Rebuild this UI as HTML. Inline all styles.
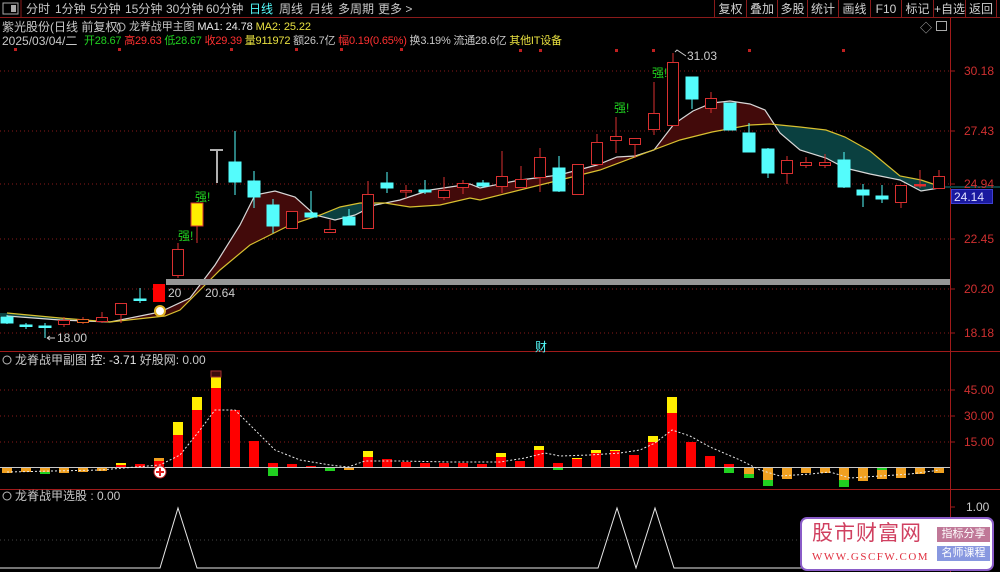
<!DOCTYPE html>
<html><head><meta charset="utf-8"><style>
*{margin:0;padding:0;box-sizing:border-box}
body{width:1000px;height:572px;background:#000;overflow:hidden;position:relative;font-family:"Liberation Sans","Noto Sans CJK SC",sans-serif;font-size:12px;color:#c8c8c8}
.a{position:absolute;white-space:nowrap;line-height:14px}
.btn{position:absolute;top:0;height:18px;border-left:1px solid #8a1a1a;color:#d0d0d0;text-align:center;line-height:18px;font-size:12px}
</style></head><body>
<svg width="1000" height="572" style="position:absolute;left:0;top:0">
<defs>
<clipPath id="aboveY"><polygon points="0,0 1000,0 1000,186 939,186 921,180 900,176 870,151 845,137 826,130 800,127 770,124 750,125 712,132 680,140 640,155 600,170 560,180 520,190 480,200 470,198 440,205 410,207 385,203 360,203 340,207 320,215 290,225 250,245 220,270 200,290 180,310 165,316 110,322 60,318 7,313 0,313"/></clipPath>
<clipPath id="belowY"><polygon points="0,572 1000,572 1000,186 939,186 921,180 900,176 870,151 845,137 826,130 800,127 770,124 750,125 712,132 680,140 640,155 600,170 560,180 520,190 480,200 470,198 440,205 410,207 385,203 360,203 340,207 320,215 290,225 250,245 220,270 200,290 180,310 165,316 110,322 60,318 7,313 0,313"/></clipPath>
</defs>
<line x1="0" y1="17.5" x2="1000" y2="17.5" stroke="#8a1a1a"/>
<rect x="3" y="3" width="15" height="11" fill="none" stroke="#aaa"/><rect x="11" y="5" width="5" height="7" fill="#aaa"/>
<line x1="21" y1="0" x2="21" y2="17" stroke="#8a1a1a"/>
<g stroke="#8a1a1a" stroke-dasharray="1,3">
<line x1="0" y1="71" x2="950" y2="71"/><line x1="0" y1="131" x2="950" y2="131"/><line x1="0" y1="184" x2="950" y2="184"/><line x1="0" y1="239" x2="950" y2="239"/><line x1="0" y1="289" x2="950" y2="289"/><line x1="0" y1="333" x2="950" y2="333"/>
<line x1="0" y1="390" x2="950" y2="390"/><line x1="0" y1="416" x2="950" y2="416"/><line x1="0" y1="442" x2="950" y2="442"/>
</g>
<g fill="#c02020"><rect x="519" y="49" width="3" height="3"/><rect x="539" y="49" width="3" height="3"/><rect x="615" y="49" width="3" height="3"/><rect x="652" y="49" width="3" height="3"/><rect x="748" y="49" width="3" height="3"/><rect x="842" y="49" width="3" height="3"/><rect x="14" y="48" width="3" height="3"/><rect x="118" y="48" width="3" height="3"/><rect x="230" y="48" width="3" height="3"/><rect x="295" y="48" width="3" height="3"/><rect x="340" y="48" width="3" height="3"/><rect x="400" y="48" width="3" height="3"/></g>
<line x1="950.5" y1="18" x2="950.5" y2="572" stroke="#a01a1a"/>
<line x1="0" y1="351.5" x2="1000" y2="351.5" stroke="#a01a1a"/>
<line x1="0" y1="489.5" x2="1000" y2="489.5" stroke="#a01a1a"/>
<g stroke="#a01a1a"><line x1="950" y1="71" x2="955" y2="71"/><line x1="950" y1="131" x2="955" y2="131"/><line x1="950" y1="184" x2="955" y2="184"/><line x1="950" y1="239" x2="955" y2="239"/><line x1="950" y1="289" x2="955" y2="289"/><line x1="950" y1="333" x2="955" y2="333"/><line x1="950" y1="390" x2="955" y2="390"/><line x1="950" y1="416" x2="955" y2="416"/><line x1="950" y1="442" x2="955" y2="442"/><line x1="950" y1="507" x2="955" y2="507"/></g>
<polygon clip-path="url(#aboveY)" fill="#420a0a" points="0,316 7,316 60,320 110,322 160,312 190,298 215,265 240,225 255,195 275,191 295,197 315,215 335,220 355,215 375,205 400,200 430,190 470,184 480,188 520,180 559,175 597,165 617,157 635,156 654,150 674,124 693,111 712,103 730,101 750,104 765,110 780,133 800,150 826,158 845,168 870,174 900,180 921,191 939,188 1000,188 1000,572 0,572"/>
<polygon clip-path="url(#belowY)" fill="#0a4040" points="0,316 7,316 60,320 110,322 160,312 190,298 215,265 240,225 255,195 275,191 295,197 315,215 335,220 355,215 375,205 400,200 430,190 470,184 480,188 520,180 559,175 597,165 617,157 635,156 654,150 674,124 693,111 712,103 730,101 750,104 765,110 780,133 800,150 826,158 845,168 870,174 900,180 921,191 939,188 1000,188 1000,0 0,0"/>
<polyline fill="none" stroke="#d8d8d8" stroke-width="1.2" points="7,316 60,320 110,322 160,312 190,298 215,265 240,225 255,195 275,191 295,197 315,215 335,220 355,215 375,205 400,200 430,190 470,184 480,188 520,180 559,175 597,165 617,157 635,156 654,150 674,124 693,111 712,103 730,101 750,104 765,110 780,133 800,150 826,158 845,168 870,174 900,180 921,191 939,188"/>
<polyline fill="none" stroke="#d8c030" stroke-width="1.2" points="7,313 60,318 110,322 165,316 180,310 200,290 220,270 250,245 290,225 320,215 340,207 360,203 385,203 410,207 440,205 470,198 480,200 520,190 560,180 600,170 640,155 680,140 712,132 750,125 770,124 800,127 826,130 845,137 870,151 900,176 921,180 939,186"/>
<rect x="166" y="279" width="784" height="6" fill="#969696"/>
<g stroke-width="1">
<g stroke="#54fcfc" fill="#54fcfc">
<line x1="7" y1="315" x2="7" y2="324"/><rect x="1" y="317" width="12" height="6"/>
<line x1="26" y1="323" x2="26" y2="329"/><rect x="20" y="325" width="12" height="1.5"/>
<line x1="45" y1="323" x2="45" y2="338"/><rect x="39" y="326" width="12" height="1.5"/>
<line x1="140" y1="288" x2="140" y2="303"/><rect x="134" y="299" width="12" height="1.5"/>
<line x1="235" y1="131" x2="235" y2="195"/><rect x="229" y="162" width="12" height="20"/>
<line x1="254" y1="171" x2="254" y2="208"/><rect x="248" y="181" width="12" height="16"/>
<line x1="273" y1="199" x2="273" y2="233"/><rect x="267" y="205" width="12" height="21"/>
<line x1="311" y1="191" x2="311" y2="218"/><rect x="305" y="213" width="12" height="4"/>
<line x1="349" y1="209" x2="349" y2="225"/><rect x="343" y="217" width="12" height="8"/>
<line x1="387" y1="172" x2="387" y2="193"/><rect x="381" y="183" width="12" height="5"/>
<line x1="425" y1="180" x2="425" y2="194"/><rect x="419" y="190" width="12" height="2"/>
<line x1="483" y1="180" x2="483" y2="188"/><rect x="477" y="183" width="12" height="3"/>
<line x1="559" y1="156" x2="559" y2="192"/><rect x="553" y="168" width="12" height="23"/>
<line x1="692" y1="77" x2="692" y2="109"/><rect x="686" y="77" width="12" height="22"/>
<rect x="724" y="103" width="12" height="27"/>
<line x1="749" y1="123" x2="749" y2="152"/><rect x="743" y="133" width="12" height="19"/>
<line x1="768" y1="148" x2="768" y2="178"/><rect x="762" y="149" width="12" height="24"/>
<line x1="844" y1="152" x2="844" y2="188"/><rect x="838" y="160" width="12" height="27"/>
<line x1="863" y1="184" x2="863" y2="207"/><rect x="857" y="190" width="12" height="5"/>
<line x1="882" y1="185" x2="882" y2="203"/><rect x="876" y="196" width="12" height="3"/>
</g>
<g stroke="#d83030" fill="#000">
<line x1="64" y1="317" x2="64" y2="327"/><rect x="58.5" y="320.5" width="11" height="4"/>
<line x1="83" y1="317" x2="83" y2="324"/><rect x="77.5" y="319.5" width="11" height="3" stroke="#e06020"/>
<line x1="102" y1="312" x2="102" y2="323"/><rect x="96.5" y="317.5" width="11" height="4"/>
<line x1="121" y1="303" x2="121" y2="323"/><rect x="115.5" y="303.5" width="11" height="11"/>
<line x1="178" y1="243" x2="178" y2="278"/><rect x="172.5" y="249.5" width="11" height="26"/>
<rect x="286.5" y="211.5" width="11" height="17"/>
<line x1="330" y1="220" x2="330" y2="232"/><rect x="324.5" y="229.5" width="11" height="3"/>
<line x1="368" y1="181" x2="368" y2="228"/><rect x="362.5" y="194.5" width="11" height="34"/>
<line x1="406" y1="185" x2="406" y2="198"/><rect x="400.5" y="190.5" width="11" height="1.5"/>
<line x1="444" y1="177" x2="444" y2="200"/><rect x="438.5" y="190.5" width="11" height="7"/>
<line x1="463" y1="180" x2="463" y2="194"/><rect x="457.5" y="183.5" width="11" height="4"/>
<line x1="502" y1="151" x2="502" y2="193"/><rect x="496.5" y="176.5" width="11" height="10"/>
<line x1="521" y1="166" x2="521" y2="188"/><rect x="515.5" y="179.5" width="11" height="8"/>
<line x1="540" y1="148" x2="540" y2="192"/><rect x="534.5" y="157.5" width="11" height="20"/>
<rect x="572.5" y="164.5" width="11" height="30"/>
<line x1="597" y1="134" x2="597" y2="164"/><rect x="591.5" y="142.5" width="11" height="22"/>
<line x1="616" y1="117" x2="616" y2="153"/><rect x="610.5" y="136.5" width="11" height="4"/>
<line x1="635" y1="138" x2="635" y2="158"/><rect x="629.5" y="138.5" width="11" height="6"/>
<line x1="654" y1="82" x2="654" y2="135"/><rect x="648.5" y="113.5" width="11" height="16"/>
<line x1="673" y1="53" x2="673" y2="125"/><rect x="667.5" y="62.5" width="11" height="63"/>
<line x1="711" y1="92" x2="711" y2="113"/><rect x="705.5" y="98.5" width="11" height="10"/>
<line x1="787" y1="156" x2="787" y2="184"/><rect x="781.5" y="160.5" width="11" height="13"/>
<line x1="806" y1="157" x2="806" y2="168"/><rect x="800.5" y="162.5" width="11" height="3"/>
<line x1="825" y1="154" x2="825" y2="168"/><rect x="819.5" y="162.5" width="11" height="3"/>
<line x1="901" y1="185" x2="901" y2="208"/><rect x="895.5" y="185.5" width="11" height="17"/>
<line x1="920" y1="170" x2="920" y2="188"/><rect x="914.5" y="184.5" width="11" height="1.5" fill="#ff2020"/>
<line x1="939" y1="170" x2="939" y2="188"/><rect x="933.5" y="176.5" width="11" height="12"/>
</g>
<rect x="153" y="284" width="12" height="18" fill="#ff0000"/>
<line x1="197" y1="226" x2="197" y2="243" stroke="#d83030"/>
<rect x="191" y="203" width="12" height="23" fill="#ffee00" stroke="#d83030"/>
<g stroke="#b0b0b0" stroke-width="2"><line x1="210" y1="150" x2="223" y2="150"/><line x1="217" y1="150" x2="217" y2="183"/></g>
</g>
<circle cx="160" cy="311" r="5" fill="#fff" stroke="#e0b020" stroke-width="2"/>
<line x1="0" y1="467.5" x2="950" y2="467.5" stroke="#c8c8c8"/>
<g>
<g fill="#f0a020">
<rect x="2" y="468" width="10" height="5"/><rect x="21" y="468" width="10" height="4"/><rect x="40" y="468" width="10" height="6"/><rect x="59" y="468" width="10" height="5"/><rect x="78" y="468" width="10" height="4"/><rect x="97" y="468" width="10" height="3"/><rect x="344" y="468" width="10" height="2"/>
<rect x="744" y="468" width="10" height="7"/><rect x="763" y="468" width="10" height="12"/><rect x="782" y="468" width="10" height="11"/><rect x="801" y="468" width="10" height="5"/><rect x="820" y="468" width="10" height="5"/><rect x="839" y="468" width="10" height="12"/><rect x="858" y="468" width="10" height="13"/><rect x="877" y="468" width="10" height="11"/><rect x="896" y="468" width="10" height="10"/><rect x="915" y="468" width="10" height="6"/><rect x="934" y="468" width="10" height="5"/>
</g>
<g fill="#20d020"><rect x="40" y="472" width="10" height="2"/><rect x="268" y="468" width="10" height="8"/><rect x="325" y="468" width="10" height="3"/><rect x="553" y="468" width="10" height="2"/><rect x="724" y="468" width="10" height="5"/><rect x="744" y="474" width="10" height="4"/><rect x="763" y="480" width="10" height="6"/><rect x="839" y="480" width="10" height="7"/><rect x="877" y="468" width="10" height="2"/></g>
<g fill="#ff0000">
<rect x="116" y="464" width="10" height="3"/><rect x="135" y="464" width="10" height="3"/><rect x="154" y="458" width="10" height="9"/>
<rect x="173" y="422" width="10" height="45"/><rect x="192" y="397" width="10" height="70"/><rect x="211" y="371" width="10" height="96"/><rect x="230" y="410" width="10" height="57"/><rect x="249" y="441" width="10" height="26"/><rect x="268" y="463" width="10" height="4"/><rect x="287" y="464" width="10" height="3"/><rect x="306" y="466" width="10" height="1"/>
<rect x="363" y="451" width="10" height="16"/><rect x="382" y="459" width="10" height="8"/><rect x="401" y="462" width="10" height="5"/><rect x="420" y="463" width="10" height="4"/><rect x="439" y="463" width="10" height="4"/><rect x="458" y="463" width="10" height="4"/><rect x="477" y="464" width="10" height="3"/><rect x="496" y="453" width="10" height="14"/><rect x="515" y="461" width="10" height="6"/><rect x="534" y="446" width="10" height="21"/><rect x="553" y="463" width="10" height="4"/><rect x="572" y="458" width="10" height="9"/><rect x="591" y="450" width="10" height="17"/><rect x="610" y="450" width="10" height="17"/><rect x="629" y="455" width="10" height="12"/><rect x="648" y="436" width="10" height="31"/><rect x="667" y="397" width="10" height="70"/><rect x="686" y="442" width="10" height="25"/><rect x="705" y="456" width="10" height="11"/><rect x="724" y="464" width="10" height="3"/>
</g>
<g fill="#ffee00"><rect x="116" y="463" width="10" height="2"/><rect x="154" y="458" width="10" height="3" fill="#f0a020"/><rect x="173" y="422" width="10" height="13"/><rect x="192" y="397" width="10" height="13"/><rect x="211" y="377" width="10" height="11"/><rect x="363" y="451" width="10" height="6"/><rect x="496" y="453" width="10" height="4"/><rect x="534" y="446" width="10" height="4"/><rect x="572" y="458" width="10" height="1"/><rect x="591" y="450" width="10" height="3"/><rect x="610" y="450" width="10" height="1"/><rect x="648" y="436" width="10" height="6"/><rect x="667" y="397" width="10" height="16"/></g>
<rect x="211" y="371" width="10" height="6" fill="#3a0c0c" stroke="#a03030"/>
</g>
<polyline fill="none" stroke="#e8e8e8" stroke-dasharray="2,2" points="7,472 100,470 160,465 180,455 200,430 215,410 235,410 255,430 275,450 300,460 330,465 348,467 365,461 400,461 450,462 500,462 525,458 545,453 560,456 590,455 620,453 640,450 655,443 672,430 690,436 710,447 740,460 760,470 780,476 810,474 830,472 850,478 880,476 910,474 940,470"/>
<circle cx="160" cy="472" r="6" fill="#fff" stroke="#c02020"/><path d="M156 472h8M160 468v8" stroke="#e02020" stroke-width="2"/>
<line x1="0" y1="540" x2="950" y2="540" stroke="#444" stroke-dasharray="1,3"/>
<polyline fill="none" stroke="#e8e8e8" points="0,568 160,568 178,508 197,568 598,568 617,508 636,568 655,508 674,568 950,568"/>
<g stroke="#bbb" fill="none"><circle cx="7" cy="360" r="4"/><circle cx="7" cy="496" r="4"/><circle cx="121" cy="27" r="4"/></g>
<path d="M47 338 H55 M47 338 l3 -2 M47 338 l3 2" stroke="#ccc" fill="none"/>
<path d="M675 52 L677 50 L686 56" stroke="#ccc" fill="none"/>
</svg>

<div class="a" style="left:26px;top:2px">分时</div>
<div class="a" style="left:55px;top:2px">1分钟</div>
<div class="a" style="left:90px;top:2px">5分钟</div>
<div class="a" style="left:125px;top:2px">15分钟</div>
<div class="a" style="left:166px;top:2px">30分钟</div>
<div class="a" style="left:206px;top:2px">60分钟</div>
<div class="a" style="left:249px;top:2px;color:#54fcfc">日线</div>
<div class="a" style="left:279px;top:2px">周线</div>
<div class="a" style="left:309px;top:2px">月线</div>
<div class="a" style="left:338px;top:2px">多周期</div>
<div class="a" style="left:378px;top:2px">更多 &gt;</div>
<div class="btn" style="left:714px;width:32px">复权</div>
<div class="btn" style="left:746px;width:31px">叠加</div>
<div class="btn" style="left:777px;width:30px">多股</div>
<div class="btn" style="left:807px;width:31px">统计</div>
<div class="btn" style="left:838px;width:32px">画线</div>
<div class="btn" style="left:870px;width:31px">F10</div>
<div class="btn" style="left:901px;width:32px">标记</div>
<div class="btn" style="left:933px;width:32px">+自选</div>
<div class="btn" style="left:965px;width:32px;border-right:1px solid #8a1a1a">返回</div>
<div class="a" style="left:920px;top:21px;color:#aaa">◇</div>
<div class="a" style="left:936px;top:21px;width:11px;height:10px;border:1px solid #aaa"></div>

<div class="a" style="left:2px;top:20px">紫光股份(日线 前复权)</div>
<div class="a" style="left:129px;top:20px;font-size:11px;letter-spacing:-0.1px">龙脊战甲主图 <span style="color:#e8e8e8">MA1: 24.78</span> <span style="color:#e8e040">MA2: 25.22</span></div>
<div class="a" style="left:2px;top:34px">2025/03/04/二</div>
<div class="a" style="left:84px;top:34px;font-size:11px;letter-spacing:-0.2px"><span style="color:#20d020">开28.67</span> <span style="color:#ff3030">高29.63</span> <span style="color:#20d020">低28.67</span> <span style="color:#ff3030">收29.39</span> <span style="color:#e8e040">量911972</span> 额26.7亿 <span style="color:#ff3030">幅0.19(0.65%)</span> 换3.19% 流通28.6亿 <span style="color:#e8e040">其他IT设备</span></div>

<div class="a" style="left:178px;top:229px;color:#20d020">强!</div>
<div class="a" style="left:195px;top:190px;color:#20d020">强!</div>
<div class="a" style="left:614px;top:101px;color:#20d020">强!</div>
<div class="a" style="left:652px;top:66px;color:#20d020">强!</div>
<div class="a" style="left:687px;top:49px;color:#ccc">31.03</div>
<div class="a" style="left:57px;top:331px;color:#ccc">18.00</div>
<div class="a" style="left:168px;top:286px;color:#ccc">20</div>
<div class="a" style="left:205px;top:286px;color:#ccc">20.64</div>
<div class="a" style="left:535px;top:340px;color:#54fcfc">财</div>

<div class="a" style="left:964px;top:64px;color:#d03030">30.18</div>
<div class="a" style="left:964px;top:124px;color:#d03030">27.43</div>
<div class="a" style="left:964px;top:177px;color:#d03030">24.94</div>
<div class="a" style="left:951px;top:189px;width:42px;height:15px;background:#1a1aa0;border:1px solid #4040d0;color:#e0e0ff;padding-left:2px">24.14</div>
<div class="a" style="left:964px;top:232px;color:#d03030">22.45</div>
<div class="a" style="left:964px;top:282px;color:#d03030">20.20</div>
<div class="a" style="left:964px;top:326px;color:#d03030">18.18</div>
<div class="a" style="left:964px;top:383px;color:#d03030">45.00</div>
<div class="a" style="left:964px;top:409px;color:#d03030">30.00</div>
<div class="a" style="left:964px;top:435px;color:#d03030">15.00</div>
<div class="a" style="left:966px;top:500px;color:#ccc">1.00</div>

<div class="a" style="left:15px;top:353px">龙脊战甲副图 <span style="color:#e8e8e8">控: -3.71</span> 好股网: 0.00</div>
<div class="a" style="left:15px;top:489px">龙脊战甲选股 : 0.00</div>

<div class="a" style="left:800px;top:517px;width:194px;height:54px;background:#fff;border:2px solid #8a5cc8;border-radius:7px"></div>
<div class="a" style="left:812px;top:522px;font-size:21px;line-height:24px;color:#d04060;letter-spacing:1px">股市财富网</div>
<div class="a" style="left:812px;top:550px;font-family:'Liberation Serif',serif;font-size:11px;color:#e03040;letter-spacing:1.5px">WWW.GSCFW.COM</div>
<div class="a" style="left:937px;top:527px;width:53px;height:15px;background:#c07898;color:#fff;font-size:11px;text-align:center">指标分享</div>
<div class="a" style="left:937px;top:546px;width:53px;height:15px;background:#8898e0;color:#fff;font-size:11px;text-align:center">名师课程</div>
</body></html>
